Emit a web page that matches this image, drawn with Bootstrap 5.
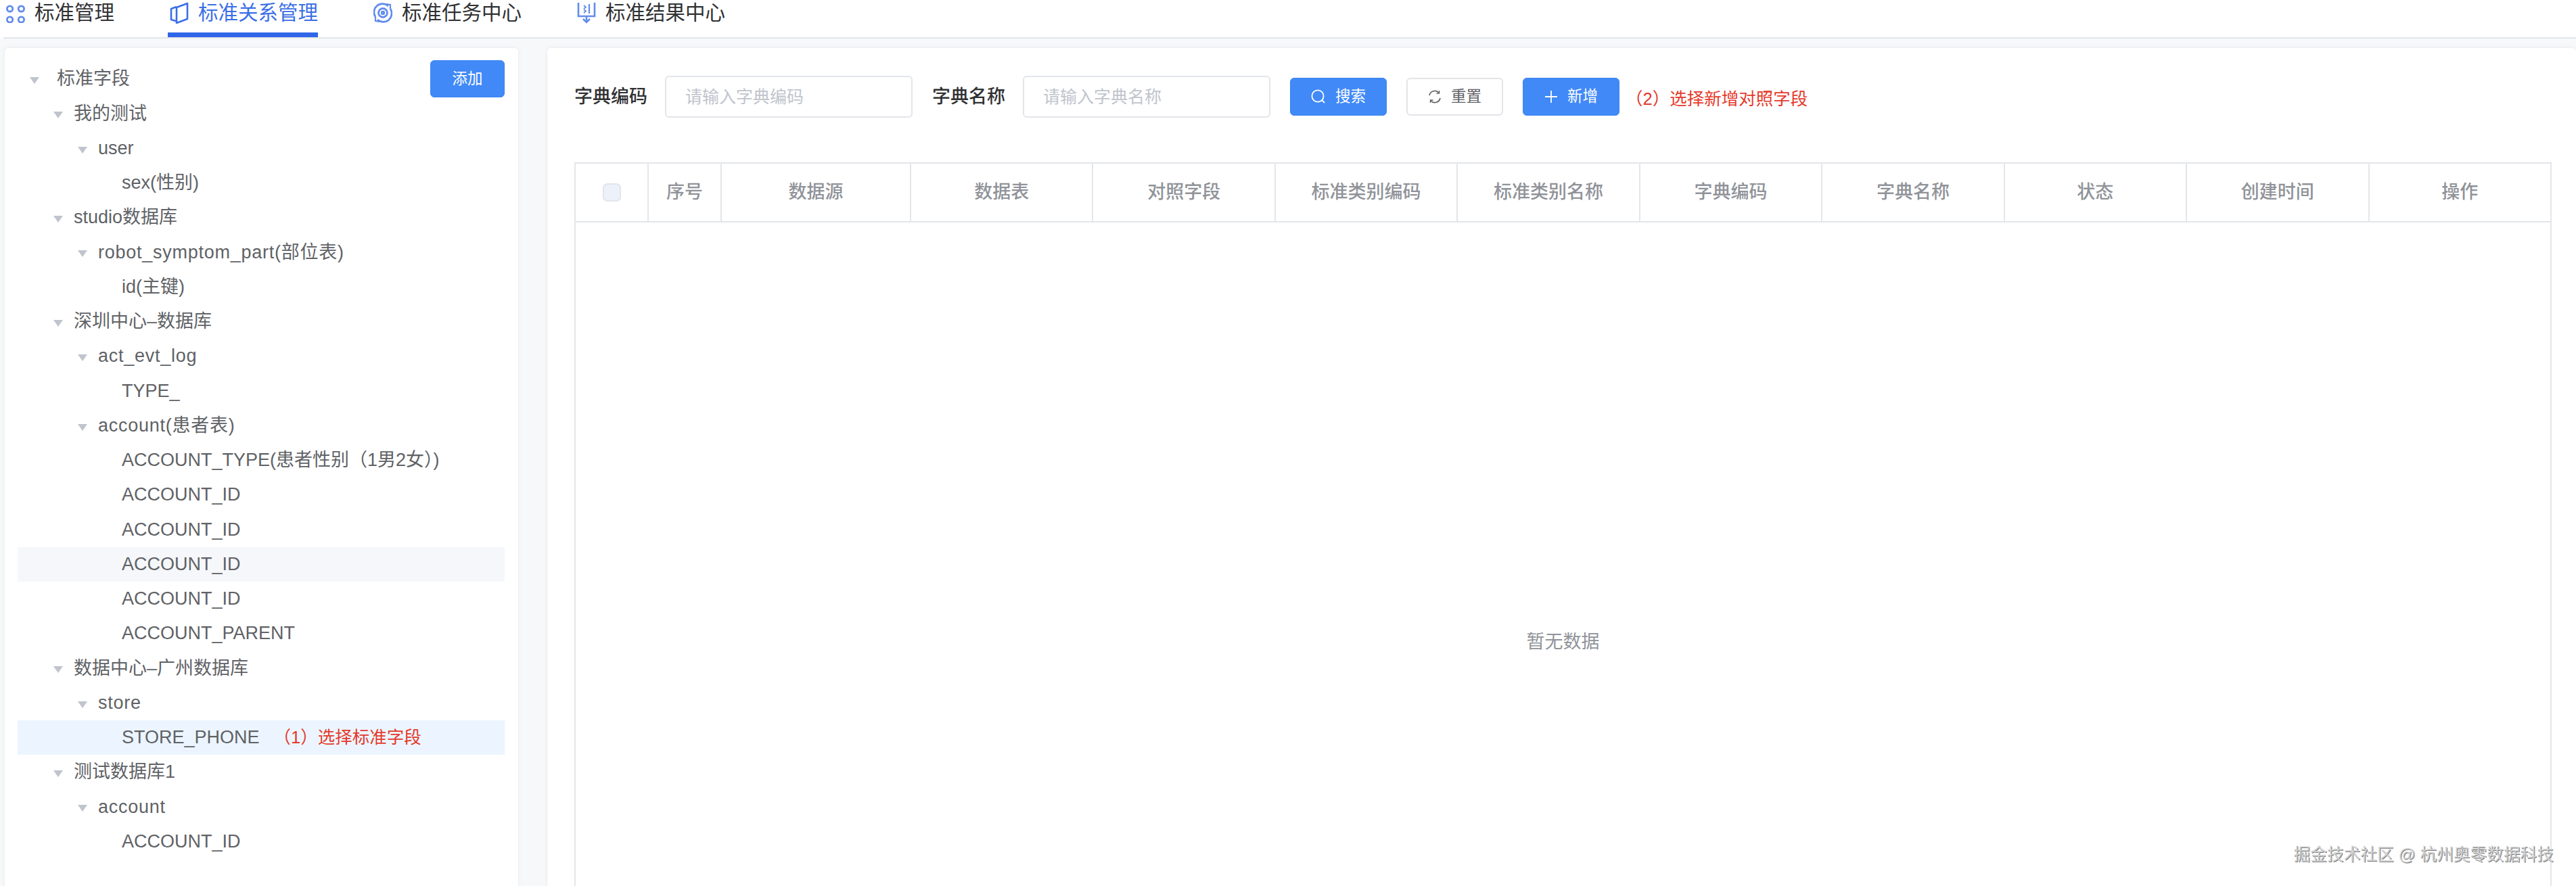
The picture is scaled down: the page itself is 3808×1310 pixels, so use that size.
<!DOCTYPE html>
<html lang="zh-CN">
<head>
  <meta charset="UTF-8">
  <title>标准关系管理</title>
  <link href="https://cdn.jsdelivr.net/npm/bootstrap@5.3.0/dist/css/bootstrap.min.css" rel="stylesheet">
  <style>
    html, body { height: 100%; overflow: hidden; }
    body {
      background: #fff;
      color: #606266;
      font-family: "Liberation Sans", "Noto Sans CJK SC", sans-serif;
      font-size: 27px;
      line-height: 1.5;
    }
    /* top tabs */
    .tab-bar {
      height: 57px;
      margin-left: 5px;
      padding-left: 0;
      gap: 74px;
      border-bottom: 2px solid #e4e6ea;
      flex-wrap: nowrap;
    }
    .tab-item {
      position: relative;
      height: 55px;
      padding: 0 4px 18px;
      gap: 14px;
      font-size: 29.5px;
      line-height: 37px;
      color: #303133;
      white-space: nowrap;
    }
    .tab-item svg { flex: none; display: block; }
    .tab-item.on { color: #3b6fe6; }
    .tab-item.on::after {
      content: "";
      position: absolute;
      left: 1px;
      right: 4px;
      bottom: 0;
      height: 7px;
      background: #2f66e8;
    }
    /* page body */
    .page-wrap {
      height: calc(100vh - 57px);
      background: #f7f8fa;
      padding: 13px 0 0 6px;
      gap: 41px;
    }
    .panel {
      background: #fff;
      border: 1px solid #eceef1;
      border-bottom: 0;
      border-radius: 6px 6px 0 0;
      box-shadow: 0 0 10px rgba(0, 0, 0, .03);
    }
    .tree-panel { width: 761px; flex: none; padding: 20px 20px 0 19px; }
    .table-panel { flex: 1 1 0; min-width: 0; padding: 41px 36px 0 40px; border-right: 0; overflow: hidden; }
    /* tree */
    .tree-row {
      height: 51.25px;
      white-space: nowrap;
      color: #606266;
    }
    .lv0 { padding-left: 18px; }
    .lv1 { padding-left: 53px; }
    .lv2 { padding-left: 89px; }
    .lv3 { padding-left: 154px; }
    .tree-arrow {
      flex: none;
      width: 0;
      height: 0;
      margin-top: 5px;
      margin-right: 16px;
      border-left: 7px solid transparent;
      border-right: 7px solid transparent;
      border-top: 10px solid #c0c4cc;
    }
    .lv0 .tree-arrow { margin-right: 26px; }
    .wide-latin { letter-spacing: .75px; }
    .tree-row.hovered { background: #f5f7fa; }
    .tree-row.picked { background: #ecf5ff; }
    .hint-red { color: #e5392b; font-size: 25.5px; }
    .tree-row .hint-red { margin-left: 21px; }
    /* buttons */
    .btn-main, .btn-plain {
      width: 143px;
      height: 56px;
      padding: 0;
      gap: 14px;
      font-size: 22.5px;
      border-radius: 6px;
    }
    .btn-main { background: #4189f7; border: 1px solid #3d84f2; color: #fff; }
    .btn-plain { background: #fff; border: 2px solid #e2e4e8; color: #606266; }
    .btn-add { width: 110px; height: 55px; margin-top: -2px; }
    /* search form */
    .search-bar { height: 62px; }
    .field-label { width: 108px; margin-right: 26px; flex: none; color: #303133; font-weight: 500; }
    .field-input {
      width: 366px;
      height: 62px;
      flex: none;
      font-size: 25px;
      padding: 0 28px;
      color: #606266;
      border: 2px solid #e2e5ea;
      border-radius: 6px;
    }
    .field-input::placeholder { color: #c0c4cc; }
    .search-bar .field-label + .field-input { margin-right: 29px; }
    .search-bar .btn-main, .search-bar .btn-plain { margin-right: 29px; }
    .search-bar .hint-red { margin: 7px 0 0 -20px; }
    /* table */
    .dict-table {
      --bs-border-width: 2px;
      --bs-table-border-color: #e3e6ea;
      table-layout: fixed;
      width: 100%;
      margin: 66px 0 0;
      color: #909399;
    }
    .dict-table th {
      height: 87px;
      padding: 0;
      font-weight: 500;
      color: #909399;
      text-align: center;
      vertical-align: middle;
    }
    .col-short { width: 108px; }
    .col-source { width: 280px; }
    .dict-table .empty-cell {
      height: 1242px;
      padding: 0;
      text-align: center;
      vertical-align: middle;
      color: #909399;
    }
    .row-check {
      display: block;
      width: 27px;
      height: 27px;
      margin: 0 auto;
      background-color: #edf1fa;
      border: 2px solid #e1e5ec;
      border-radius: 4px;
    }
    .mark-wm {
      position: absolute;
      right: 33px;
      top: 1245px;
      font-size: 24.7px;
      line-height: 37px;
      white-space: nowrap;
      color: #d2d2d2;
      text-shadow: 1px 1px 0 #7a7a7a;
    }
  </style>
</head>
<body>
  <ul class="nav tab-bar">
    <li class="nav-item d-flex align-items-center tab-item">
      <svg width="28" height="30" viewBox="0 0 28 30" fill="none" stroke="#628cec" stroke-width="2.8"><circle cx="5.6" cy="9" r="4.2"/><circle cx="22.4" cy="9" r="4.2"/><circle cx="5.6" cy="25" r="4.2"/><circle cx="22.4" cy="25" r="4.2"/></svg>
      标准管理
    </li>
    <li class="nav-item d-flex align-items-center tab-item on">
      <svg width="28" height="32" viewBox="0 0 28 32" fill="none" stroke="#3b6fe6" stroke-width="2.6" stroke-linejoin="round"><path d="M10 7 L2 10 V26 L9 28"/><path d="M10 31 V8 L26 2 V25 Z"/></svg>
      标准关系管理
    </li>
    <li class="nav-item d-flex align-items-center tab-item">
      <svg width="28" height="32" viewBox="0 0 28 32" fill="none" stroke="#628cec" stroke-width="2.8"><circle cx="14" cy="16" r="6.5"/><circle cx="14" cy="16" r="1.8"/><path d="M3 22 A12.5 12.5 0 0 1 22 6"/><path d="M25 10 A12.5 12.5 0 0 1 6 26"/><path d="M19 3 L25 4 V10" stroke-width="2.2"/><path d="M9 29 L3 28 V22" stroke-width="2.2"/></svg>
      标准任务中心
    </li>
    <li class="nav-item d-flex align-items-center tab-item">
      <svg width="28" height="33" viewBox="0 0 28 33" fill="none" stroke="#628cec" stroke-width="2.6"><path d="M2 2 V22 H26 V2"/><path d="M14 22 V31"/><path d="M9 26 L14 31 L19 26"/><path d="M10 6 L13 8.5 L10 11" stroke-width="1.9"/><path d="M10 12 L13 14.5 L10 17" stroke-width="1.9"/><path d="M18 4 V18" stroke-width="2.2"/></svg>
      标准结果中心
    </li>
  </ul>

  <div class="d-flex page-wrap">
    <div class="panel tree-panel">
      <div class="tree-row d-flex align-items-center justify-content-between lv0">
        <span class="d-flex align-items-center"><i class="tree-arrow"></i>标准字段</span>
        <button type="button" class="btn btn-main btn-add d-inline-flex align-items-center justify-content-center align-self-start">添加</button>
      </div>
      <div class="tree-row d-flex align-items-center lv1"><i class="tree-arrow"></i>我的测试</div>
      <div class="tree-row d-flex align-items-center lv2"><i class="tree-arrow"></i>user</div>
      <div class="tree-row d-flex align-items-center lv3">sex(性别)</div>
      <div class="tree-row d-flex align-items-center lv1"><i class="tree-arrow"></i>studio数据库</div>
      <div class="tree-row d-flex align-items-center lv2 wide-latin"><i class="tree-arrow"></i>robot_symptom_part(部位表)</div>
      <div class="tree-row d-flex align-items-center lv3">id(主键)</div>
      <div class="tree-row d-flex align-items-center lv1"><i class="tree-arrow"></i>深圳中心–数据库</div>
      <div class="tree-row d-flex align-items-center lv2 wide-latin"><i class="tree-arrow"></i>act_evt_log</div>
      <div class="tree-row d-flex align-items-center lv3">TYPE_</div>
      <div class="tree-row d-flex align-items-center lv2 wide-latin"><i class="tree-arrow"></i>account(患者表)</div>
      <div class="tree-row d-flex align-items-center lv3">ACCOUNT_TYPE(患者性别（1男2女）)</div>
      <div class="tree-row d-flex align-items-center lv3">ACCOUNT_ID</div>
      <div class="tree-row d-flex align-items-center lv3">ACCOUNT_ID</div>
      <div class="tree-row d-flex align-items-center lv3 hovered">ACCOUNT_ID</div>
      <div class="tree-row d-flex align-items-center lv3">ACCOUNT_ID</div>
      <div class="tree-row d-flex align-items-center lv3">ACCOUNT_PARENT</div>
      <div class="tree-row d-flex align-items-center lv1"><i class="tree-arrow"></i>数据中心–广州数据库</div>
      <div class="tree-row d-flex align-items-center lv2 wide-latin"><i class="tree-arrow"></i>store</div>
      <div class="tree-row d-flex align-items-center lv3 picked">STORE_PHONE<span class="hint-red">（1）选择标准字段</span></div>
      <div class="tree-row d-flex align-items-center lv1"><i class="tree-arrow"></i>测试数据库1</div>
      <div class="tree-row d-flex align-items-center lv2 wide-latin"><i class="tree-arrow"></i>account</div>
      <div class="tree-row d-flex align-items-center lv3">ACCOUNT_ID</div>
    </div>

    <div class="panel table-panel">
      <form class="d-flex align-items-center search-bar">
        <label class="field-label">字典编码</label>
        <input type="text" class="form-control field-input" placeholder="请输入字典编码">
        <label class="field-label">字典名称</label>
        <input type="text" class="form-control field-input" placeholder="请输入字典名称">
        <button type="button" class="btn btn-main d-inline-flex align-items-center justify-content-center">
          <svg width="22" height="22" viewBox="0 0 22 22" fill="none" stroke="#fff" stroke-width="1.8"><circle cx="10" cy="10" r="8.6"/><path d="M16 16 L20 20"/></svg>
          搜索
        </button>
        <button type="button" class="btn btn-plain d-inline-flex align-items-center justify-content-center">
          <svg width="20" height="20" viewBox="0 0 20 20" fill="none" stroke="#606266" stroke-width="1.7"><path d="M2 8 A8.2 8.2 0 0 1 16 4"/><path d="M18 12 A8.2 8.2 0 0 1 4 16"/><path d="M16.5 1 V5 H12.5" stroke-width="1.4"/><path d="M3.5 19 V15 H7.5" stroke-width="1.4"/></svg>
          重置
        </button>
        <button type="button" class="btn btn-main d-inline-flex align-items-center justify-content-center">
          <svg width="20" height="20" viewBox="0 0 20 20" fill="none" stroke="#fff" stroke-width="1.8"><path d="M10 1 V19"/><path d="M1 10 H19"/></svg>
          新增
        </button>
        <span class="hint-red text-nowrap">（2）选择新增对照字段</span>
      </form>

      <table class="table table-bordered dict-table">
        <colgroup>
          <col class="col-short"><col class="col-short"><col class="col-source">
          <col><col><col><col><col><col><col><col><col>
        </colgroup>
        <thead>
          <tr>
            <th><input type="checkbox" class="form-check-input row-check" aria-label="全选"></th>
            <th>序号</th><th>数据源</th><th>数据表</th><th>对照字段</th><th>标准类别编码</th>
            <th>标准类别名称</th><th>字典编码</th><th>字典名称</th><th>状态</th><th>创建时间</th><th>操作</th>
          </tr>
        </thead>
        <tbody>
          <tr><td colspan="12" class="empty-cell">暂无数据</td></tr>
        </tbody>
      </table>
    </div>
  </div>
  <div class="mark-wm">掘金技术社区 @ 杭州奥零数据科技</div>

  <script src="https://cdn.jsdelivr.net/npm/bootstrap@5.3.0/dist/js/bootstrap.bundle.min.js"></script>
</body>
</html>
